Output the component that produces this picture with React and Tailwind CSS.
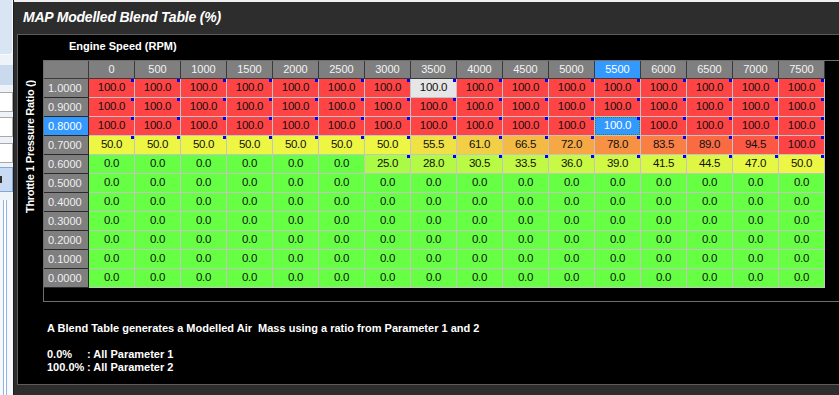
import React from "react";

const RPM = [0, 500, 1000, 1500, 2000, 2500, 3000, 3500, 4000, 4500, 5000, 5500, 6000, 6500, 7000, 7500];
const RATIOS = ["1.0000", "0.9000", "0.8000", "0.7000", "0.6000", "0.5000", "0.4000", "0.3000", "0.2000", "0.1000", "0.0000"];

const ROW07 = [50, 50, 50, 50, 50, 50, 50, 55.5, 61, 66.5, 72, 78, 83.5, 89, 94.5, 100];
const ROW06 = [0, 0, 0, 0, 0, 0, 25, 28, 30.5, 33.5, 36, 39, 41.5, 44.5, 47, 50];

function rowValues(ri) {
  if (ri <= 2) return RPM.map(() => 100);
  if (ri === 3) return ROW07;
  if (ri === 4) return ROW06;
  return RPM.map(() => 0);
}

const GREEN = [102, 255, 68];
const YELLOW = [238, 246, 68];
const RED = [254, 68, 68];

function mix(a, b, t) {
  return a.map((v, i) => Math.round(v + (b[i] - v) * t));
}

function colorFor(v) {
  const c = v <= 50 ? mix(GREEN, YELLOW, v / 50) : mix(YELLOW, RED, (v - 50) / 50);
  return `rgb(${c[0]},${c[1]},${c[2]})`;
}

function LeftChrome() {
  return (
    <div className="w-[13px] h-full flex flex-col bg-[#eef3fa] shrink-0">
      <div className="h-[55px] shrink-0 bg-[#dae5f3] border-r border-b border-[#f7faff] rounded-br-[3px]" />
      <div className="h-[10px] shrink-0" />
      <div className="h-[20px] shrink-0 bg-[#c9d9ee]" />
      <div className="h-[7px] shrink-0" />
      <div className="h-[20px] shrink-0 bg-white border-y border-r border-[#a9a9a9]" />
      <div className="h-[5px] shrink-0" />
      <div className="h-[20px] shrink-0 bg-white border-y border-r border-[#a9a9a9]" />
      <div className="h-[6px] shrink-0" />
      <div className="h-[20px] shrink-0 bg-white border-y border-r border-[#a9a9a9]" />
      <div className="h-[4px] shrink-0" />
      <div className="h-[25px] shrink-0 bg-[#c8dbf3] border-y border-r border-[#7ea9de] flex items-center">
        <div className="w-[2px] h-[7px] bg-[#333]" />
      </div>
      <div className="h-[8px] shrink-0" />
      <div className="flex-1 flex bg-[#f6f8fc]">
        <div className="w-[3px]" />
        <div className="w-px bg-[#8fb2e2]" />
        <div className="w-[2px] bg-white" />
        <div className="w-px bg-[#8fb2e2]" />
      </div>
    </div>
  );
}

function HeaderRow() {
  return (
    <>
      <div className="h-[18px] bg-[#7f7f7f] border-r border-b border-[#3a3a3a]" />
      {RPM.map((r) => (
        <div
          key={r}
          className={`h-[18px] border-r border-b border-[#3a3a3a] flex items-center justify-center text-[11px] ${
            r === 5500 ? "bg-[#3399ff] text-white" : "bg-[#7f7f7f] text-[#f4f4f4]"
          }`}
        >
          {r}
        </div>
      ))}
    </>
  );
}

function DataRow({ ratio, ri }) {
  const vals = rowValues(ri);
  const rowSel = ri === 2;
  return (
    <>
      <div
        className={`h-[19px] border-r border-b border-[#2a2a2a] flex items-center pl-[4px] text-[11px] ${
          rowSel ? "bg-[#3399ff] text-white" : "bg-[#7f7f7f] text-[#f0f0f0]"
        }`}
      >
        {ratio}
      </div>
      {vals.map((v, ci) => {
        const selected = ri === 2 && ci === 11;
        const cursor = ri === 0 && ci === 7;
        let bg = colorFor(v);
        if (selected) bg = "#3399ff";
        if (cursor) bg = "#e6e6e6";
        return (
          <div
            key={ci}
            className="relative h-[19px] border-r border-b border-[#c4c4c4]"
            style={{ backgroundColor: bg }}
          >
            <div
              className={`h-full flex items-center justify-center text-[11.5px] tracking-[-0.3px] ${
                selected ? "text-white border border-dotted border-[#2f8a2f]" : "text-[#111]"
              }`}
            >
              {v.toFixed(1)}
            </div>
            {v > 0 && <div className="absolute top-0 right-0 w-[3px] h-[3px] bg-[#0000ee]" />}
          </div>
        );
      })}
    </>
  );
}

export default function App() {
  return (
    <div
      className="w-[839px] h-[395px] flex overflow-hidden bg-[#2d2d2d]"
      style={{ fontFamily: '"Liberation Sans", Arial, sans-serif' }}
    >
      <LeftChrome />
      <div className="flex-1 flex flex-col border-l border-[#1b1b1b] min-w-0">
        <div className="h-[2px] shrink-0 bg-[#f0f0f0]" />
        <div className="h-[32px] shrink-0 pl-[9px] pt-[3px]">
          <span className="text-[14px] leading-[18px] font-bold italic text-white tracking-[-0.2px]">
            MAP Modelled Blend Table (%)
          </span>
        </div>
        <div className="ml-[3px] h-[351px] shrink-0 overflow-hidden bg-black border-t border-l border-b border-[#5c5c5c] flex flex-col">
          <div className="h-[25px] shrink-0 pl-[51px] pt-[5px] text-[11px] leading-[13px] font-bold text-white">
            Engine Speed (RPM)
          </div>
          <div className="flex shrink-0">
            <div className="w-[25px] flex justify-center items-start pt-[19px]">
              <div className="h-[135px] [writing-mode:vertical-lr] rotate-180 text-center text-[11px] leading-[13px] font-bold text-white tracking-[-0.3px] whitespace-nowrap">
                Throttle 1 Pressure Ratio ()
              </div>
            </div>
            <div className="flex-1 border-t border-l border-b border-[#6e6e6e] pb-[13px]">
              <div className="grid grid-cols-[45px_repeat(16,46px)]">
                <HeaderRow />
                {RATIOS.map((r, ri) => (
                  <DataRow key={r} ratio={r} ri={ri} />
                ))}
              </div>
            </div>
          </div>
          <div className="pl-[29px] pt-[20px] text-[11px] leading-[13px] font-bold text-white">
            <div>A Blend Table generates a Modelled Air&nbsp; Mass using a ratio from Parameter 1 and 2</div>
            <div className="h-[13px]" />
            <div className="flex">
              <span className="w-[40px]">0.0%</span>
              <span>: All Parameter 1</span>
            </div>
            <div className="flex">
              <span className="w-[40px]">100.0%</span>
              <span>: All Parameter 2</span>
            </div>
          </div>
        </div>
      </div>
    </div>
  );
}
